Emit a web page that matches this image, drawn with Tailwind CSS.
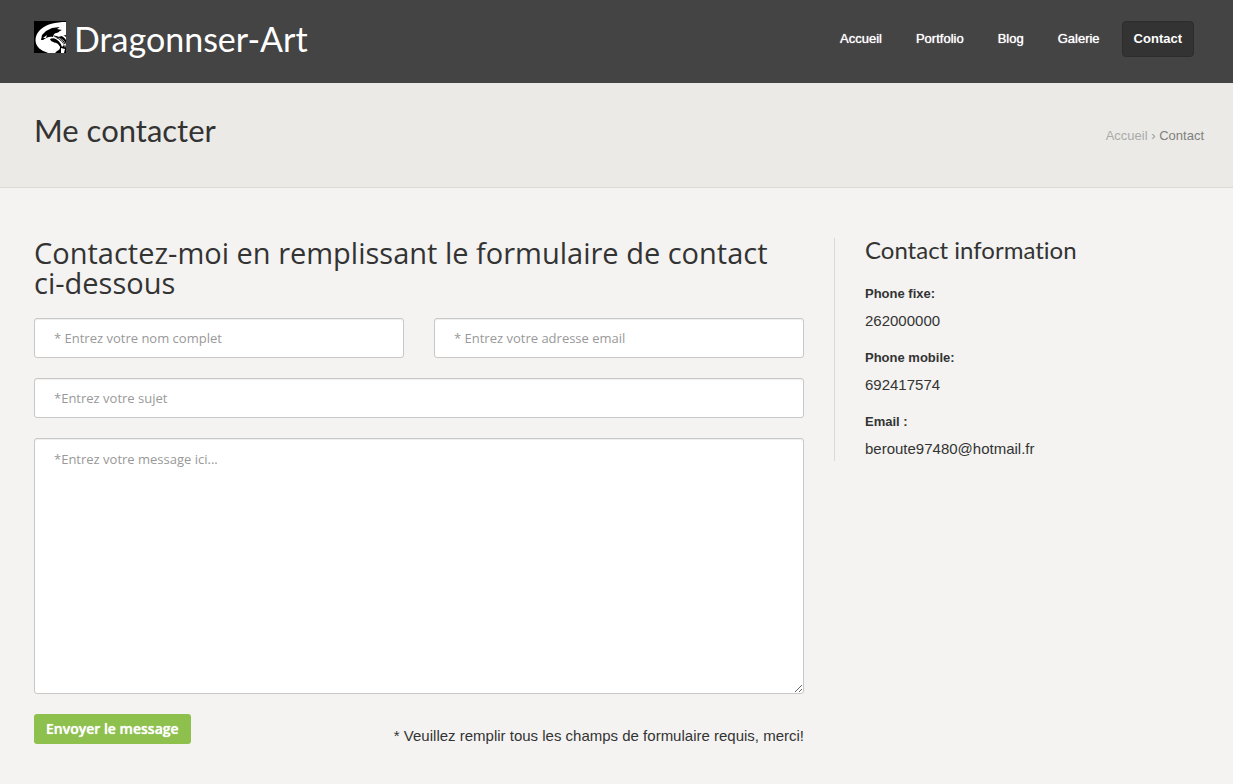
<!DOCTYPE html>
<html lang="fr">
<head>
<meta charset="utf-8">
<meta name="viewport" content="width=device-width, initial-scale=1">
<title>Me contacter | Dragonnser-Art</title>
<script src="https://cdn.jsdelivr.net/npm/@tailwindcss/browser@4"></script>
</head>
<body class="min-h-screen bg-[#f4f3f2] font-['Liberation_Sans',Arial,sans-serif] text-[15px] text-[#333]">
<header class="flex min-h-[83px] items-start justify-between bg-[#444] pt-[21px] pr-[39px] pl-[34px]">
  <a href="#" class="flex items-start gap-2 text-white">
    <svg class="size-8" viewBox="0 0 32 32" aria-hidden="true">
      <rect width="32" height="32" fill="#000"/>
      <path fill="#fff" d="M32 1C22 1 12 3 6 9C1 14 0 21 4 26C6 29 9 30 12 31L14 32H21L23 30C26 29 27 26 25 24C23 21 17 22 16 18L32 14V1Z"/>
      <path fill="#000" d="M7 19L8 14L12 10L18 7L26 6L23 8L28 9L25 11L20 13L19 16C15 15 12 17 9 19Z"/>
      <path fill="#fff" d="M7 12L10 8L13 7L10 11ZM9 17L13 14L12 17ZM24 5L32 4V8L29 9ZM25 10L32 9V13L28 13ZM21 13Q29 14 32 19V16Q29 13 22 12ZM19 17Q26 19 28 26L30 24Q26 17 19 16ZM24 17Q30 20 31 27L32 23Q30 18 24 16ZM27 27L31 28L30 32H27Z"/>
      <path fill="none" stroke="#000" d="M17 18Q24 20 26 25M5 28L8 30M20 15Q28 16 31 23"/>
    </svg>
    <span class="font-[Lato,sans-serif] text-[34px] leading-[36px]">Dragonnser-Art</span>
  </a>
  <nav aria-label="Navigation principale" class="flex gap-[10px] text-[13px] leading-[34px] text-white">
    <a href="#" class="border border-transparent px-[11px] text-shadow-[0_0_1px_#fff]">Accueil</a>
    <a href="#" class="border border-transparent px-[11px] text-shadow-[0_0_1px_#fff]">Portfolio</a>
    <a href="#" class="border border-transparent px-[11px] text-shadow-[0_0_1px_#fff]">Blog</a>
    <a href="#" class="border border-transparent px-[11px] text-shadow-[0_0_1px_#fff]">Galerie</a>
    <a href="#" aria-current="page" class="rounded border border-[#2c2c2c] bg-[#333] px-[11px] font-bold">Contact</a>
  </nav>
</header>
<section class="flex min-h-[105px] items-start justify-between border-b border-[#dbdad5] bg-[#ebeae6] pr-[29px] pl-[34px]">
  <h1 class="pt-[29px] font-[Lato,sans-serif] text-[31px] leading-[36px]">Me contacter</h1>
  <nav aria-label="Fil d'Ariane" class="pt-[43px] text-[13px] leading-[20px] text-[#808080]"><a href="#" class="text-[#aaa]">Accueil</a> <span class="text-[#999]">›</span> <span>Contact</span></nav>
</section>
<main class="flex items-start gap-[30px] pt-[50px] pr-[29px] pb-10 pl-[34px]">
  <form class="min-w-0 flex-1">
    <h2 class="mb-5 font-['Open_Sans',sans-serif] text-[29px] leading-[30px]">Contactez-moi en remplissant le formulaire de contact ci-dessous</h2>
    <div class="grid grid-cols-2 gap-x-[30px] gap-y-5 font-['Open_Sans',sans-serif] text-[13px]">
      <input type="text" aria-label="Nom complet" placeholder="* Entrez votre nom complet" class="h-10 rounded-[3px] border border-[#c8c8c8] bg-white px-[19px] inset-shadow-[0_1px_1px_#0001] placeholder:text-[#999]">
      <input type="email" aria-label="Adresse email" placeholder="* Entrez votre adresse email" class="h-10 rounded-[3px] border border-[#c8c8c8] bg-white px-[19px] inset-shadow-[0_1px_1px_#0001] placeholder:text-[#999]">
      <input type="text" aria-label="Sujet" placeholder="*Entrez votre sujet" class="col-span-2 h-10 rounded-[3px] border border-[#c8c8c8] bg-white px-[19px] inset-shadow-[0_1px_1px_#0001] placeholder:text-[#999]">
      <textarea aria-label="Message" placeholder="*Entrez votre message ici..." class="col-span-2 h-64 resize rounded-[3px] border border-[#c8c8c8] bg-white px-[19px] py-[10px] leading-[20px] inset-shadow-[0_1px_1px_#0001] placeholder:text-[#999]"></textarea>
    </div>
    <div class="mt-5 flex items-start justify-between">
      <button type="submit" class="h-[30px] rounded-[3px] bg-[#8dc04c] px-3 pb-[2px] font-['Open_Sans',sans-serif] text-[14px] font-semibold text-white text-shadow-[0_0_1px_#fff]">Envoyer le message</button>
      <p class="pt-3 leading-[20px]">* Veuillez remplir tous les champs de formulaire requis, merci!</p>
    </div>
  </form>
  <aside class="w-[370px] shrink-0 border-l border-[#d9d9d7] pl-[30px]">
    <h3 class="mb-5 font-[Lato,sans-serif] text-[24px] leading-[24px] [font-variant-ligatures:none]">Contact information</h3>
    <dl class="leading-[24px]">
      <dt class="text-[13px] font-bold">Phone fixe:</dt>
      <dd class="mt-[3px] mb-[13px]">262000000</dd>
      <dt class="text-[13px] font-bold">Phone mobile:</dt>
      <dd class="mt-[3px] mb-[13px]">692417574</dd>
      <dt class="text-[13px] font-bold">Email :</dt>
      <dd class="mt-[3px]">beroute97480@hotmail.fr</dd>
    </dl>
  </aside>
</main>
</body>
</html>
